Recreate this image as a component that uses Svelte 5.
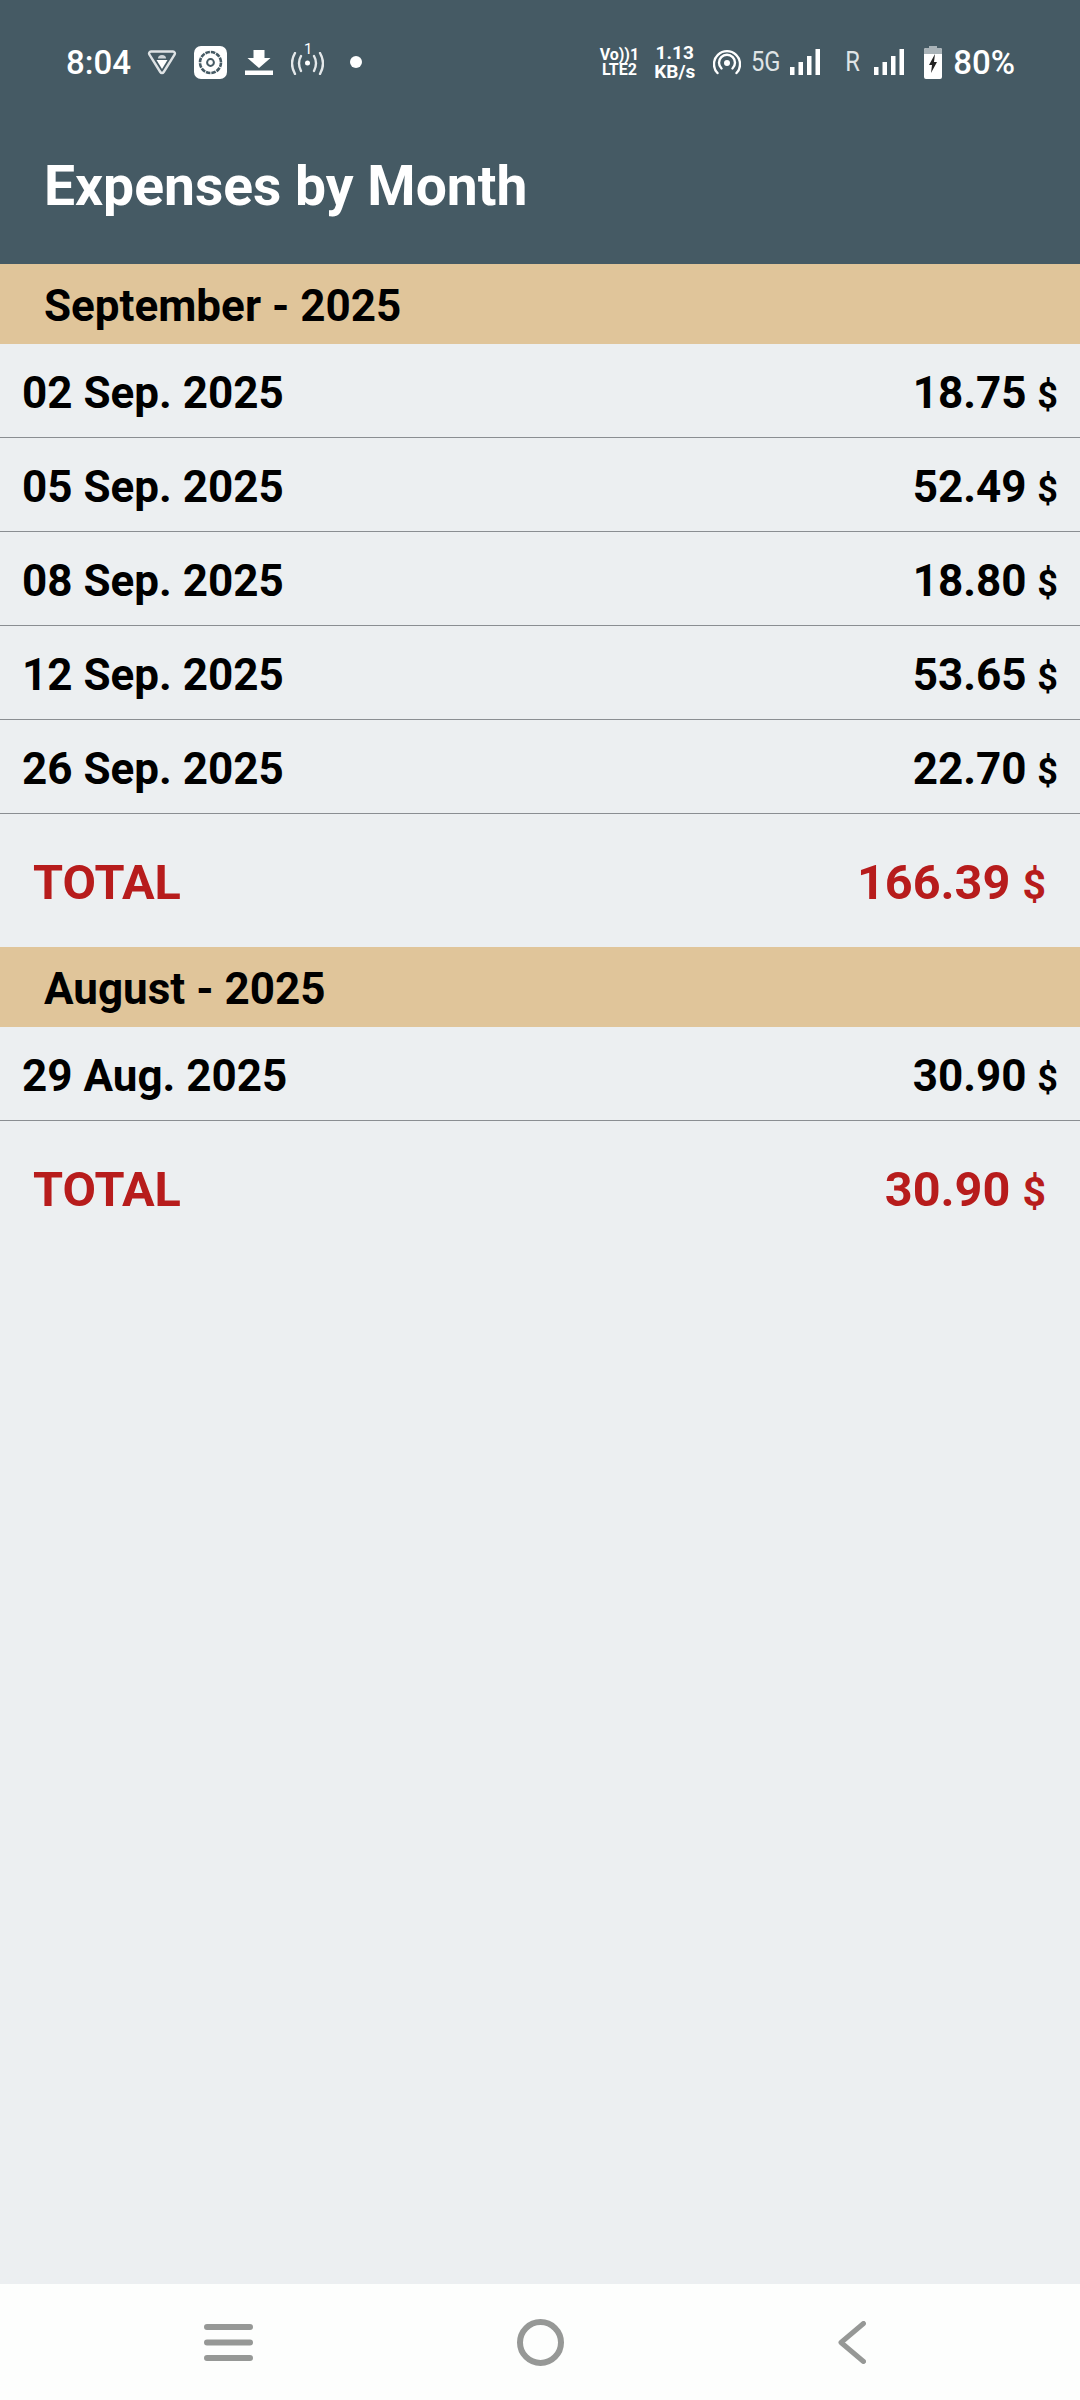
<script>
    const months = [
        {
            title: "September - 2025",
            rows: [
                ["02 Sep. 2025", "18.75"],
                ["05 Sep. 2025", "52.49"],
                ["08 Sep. 2025", "18.80"],
                ["12 Sep. 2025", "53.65"],
                ["26 Sep. 2025", "22.70"],
            ],
            total: "166.39",
        },
        {
            title: "August - 2025",
            rows: [["29 Aug. 2025", "30.90"]],
            total: "30.90",
        },
    ];
</script>

<div class="page">
    <header>
        <div class="status">
            <div class="left">
                <span class="time">8:04</span>
                <svg class="i-vpn" viewBox="0 0 30 26" width="30" height="26">
                    <path d="M4 2.500h22a2 2 0 0 1 1.700 3L16.700 23a2 2 0 0 1-3.400 0L2.300 5.500a2 2 0 0 1 1.700-3z" fill="none" stroke="#dfe3e5" stroke-width="2.400" />
                    <path d="M9.500 11h11L15 20z" fill="#fff" />
                    <path d="M11 9.500a4 3.500 0 0 1 8 0z" fill="#cfd5d8" />
                </svg>
                <svg class="i-app" viewBox="0 0 33 33" width="33" height="33">
                    <rect width="33" height="33" rx="7" fill="#fff" />
                    <circle cx="16.500" cy="16.500" r="10.500" fill="none" stroke="#455a64" stroke-width="2.600" stroke-dasharray="4.500 1" />
                    <circle cx="16.500" cy="16.500" r="3.400" fill="none" stroke="#455a64" stroke-width="2" />
                </svg>
                <svg class="i-dl" viewBox="0 0 28 25" width="28" height="25">
                    <path d="M8.500 0h11v8h6L14 18 2.500 8h6z" fill="#fff" />
                    <rect y="20.500" width="28" height="4.500" fill="#fff" />
                </svg>
                <div class="i-radio">
                    <span class="one">1</span>
                    <svg viewBox="0 0 33 23" width="33" height="23">
                        <circle cx="16.500" cy="11" r="2.500" fill="#fff" />
                        <path d="M10 4q-4 7 0 15M23 4q4 7 0 15M4 1q-6 10 0 21M29 1q6 10 0 21" fill="none" stroke="#e4e8ea" stroke-width="2.400" stroke-linecap="round" />
                    </svg>
                </div>
                <span class="dot"></span>
            </div>
            <div class="right">
                <div class="volte">
                    <span>Vo))1</span>
                    <span>LTE2</span>
                </div>
                <div class="speed">
                    <span>1.13</span>
                    <span>KB/s</span>
                </div>
                <svg class="i-hot" viewBox="0 0 28 26" width="28" height="26">
                    <circle cx="14" cy="14" r="3" fill="#fff" />
                    <path d="M8.500 19.500a8 8 0 1 1 11 0M4.500 24a13 13 0 1 1 19 0" fill="none" stroke="#fff" stroke-width="2.400" stroke-linecap="round" />
                </svg>
                <span class="net">5G</span>
                <svg class="bars" viewBox="0 0 30 26" width="30" height="26">
                    <path d="M0 18h4.500v8H0zM8.500 13H13v13H8.500zM17 7h4.500v19H17zM25.500 0H30v26h-4.500z" fill="#fff" />
                </svg>
                <span class="net r">R</span>
                <svg class="bars r-bars" viewBox="0 0 30 26" width="30" height="26">
                    <path d="M0 18h4.500v8H0zM8.500 13H13v13H8.500zM17 7h4.500v19H17zM25.500 0H30v26h-4.500z" fill="#fff" />
                </svg>
                <svg class="i-batt" viewBox="0 0 18 33" width="18" height="33">
                    <path d="M5 0h8v2h3a2 2 0 0 1 2 2v27a2 2 0 0 1-2 2H2a2 2 0 0 1-2-2V4a2 2 0 0 1 2-2h3z" fill="#fff" />
                    <path d="M5 0h8v2h3a2 2 0 0 1 2 2v4H0V4a2 2 0 0 1 2-2h3z" fill="#a9b3b8" />
                    <path d="M11 8l-6 11h3l-1 8 6-11h-3z" fill="#222" />
                </svg>
                <span class="pct">80%</span>
            </div>
        </div>
        <h1>Expenses by Month</h1>
    </header>

    <main>
        {#each months as month}
            <div class="month">{month.title}</div>
            {#each month.rows as [date, amount]}
                <div class="row">
                    <span>{date}</span>
                    <span>{amount} <small>$</small></span>
                </div>
            {/each}
            <div class="total">
                <span>TOTAL</span>
                <span>{month.total} <small>$</small></span>
            </div>
        {/each}
    </main>

    <nav>
        <svg viewBox="0 0 49 37" width="49" height="37">
            <path d="M3 3h43M3 18.500h43M3 34h43" stroke="#969896" stroke-width="6" stroke-linecap="round" />
        </svg>
        <svg viewBox="0 0 47 47" width="47" height="47">
            <circle cx="23.500" cy="23.500" r="20.500" fill="none" stroke="#969896" stroke-width="6" />
        </svg>
        <svg viewBox="0 0 28 43" width="28" height="43">
            <path d="M25.500 2.500L3 21.500l22.500 19" fill="none" stroke="#969896" stroke-width="5" stroke-linecap="round" stroke-linejoin="round" />
        </svg>
    </nav>
</div>

<style>
    :global(body) {
        margin: 0;
        background: #eceff1;
    }

    .page {
        display: flex;
        flex-direction: column;
        height: 2400px;
        font-family: Roboto, "Liberation Sans", sans-serif;
    }

    header {
        background: #455a64;
        color: #fff;
        height: 264px;
    }

    .status {
        display: flex;
        justify-content: space-between;
        align-items: center;
        height: 62px;
        padding: 31px 65px 0 66px;
    }

    .left,
    .right {
        display: flex;
        align-items: center;
    }

    .time {
        font-size: 33px;
        font-weight: 500;
    }

    .i-vpn {
        margin-left: 16px;
    }

    .i-app {
        margin-left: 17px;
    }

    .i-dl {
        margin-left: 18px;
    }

    .i-radio {
        position: relative;
        margin-left: 18px;
        padding-top: 6px;
    }

    .one {
        position: absolute;
        top: -6px;
        left: 13px;
        font-size: 15px;
    }

    .dot {
        width: 12px;
        height: 12px;
        border-radius: 50%;
        background: #fff;
        margin-left: 26px;
    }

    .volte,
    .speed {
        display: flex;
        flex-direction: column;
        align-items: center;
        font-weight: 700;
    }

    .volte {
        font-size: 16px;
        line-height: 15px;
    }

    .speed {
        font-size: 19px;
        line-height: 19px;
        margin-left: 15px;
    }

    .i-hot {
        margin-left: 18px;
    }

    .net {
        width: 32px;
        text-align: center;
        font-size: 27px;
        margin-left: 8px;
        color: #dfe4e6;
        transform: scaleX(0.88);
    }

    .bars {
        margin-left: 9px;
    }

    .net.r {
        width: 17px;
        margin-left: 24px;
    }

    .bars.r-bars {
        margin-left: 13px;
    }

    .i-batt {
        margin-left: 20px;
    }

    .pct {
        font-size: 33px;
        font-weight: 500;
        margin-left: 11px;
    }

    h1 {
        margin: 0;
        padding: 62px 0 0 44px;
        font-size: 55.200px;
        line-height: 62px;
        font-weight: 700;
    }

    main {
        flex: 1;
    }

    .month {
        height: 80px;
        line-height: 84px;
        padding-left: 44px;
        background: #e0c59a;
        font-size: 44px;
        font-weight: 700;
        color: #000;
    }

    .row {
        display: flex;
        justify-content: space-between;
        align-items: center;
        height: 88px;
        padding: 5px 22px 0;
        border-bottom: 1px solid #8a8e92;
        font-size: 44px;
        font-weight: 700;
        color: #000;
    }

    .row small {
        font-size: 36px;
        font-weight: 700;
    }

    .total {
        display: flex;
        justify-content: space-between;
        align-items: center;
        height: 129px;
        padding: 4px 34px 0 33px;
        font-size: 48.600px;
        font-weight: 700;
        color: #b71c1c;
    }

    .total small {
        font-size: 41px;
        font-weight: 700;
    }

    nav {
        display: grid;
        grid-template-columns: repeat(3, 312px);
        justify-items: center;
        align-items: center;
        height: 116px;
        padding-left: 72px;
        background: #fdfefd;
    }
</style>
